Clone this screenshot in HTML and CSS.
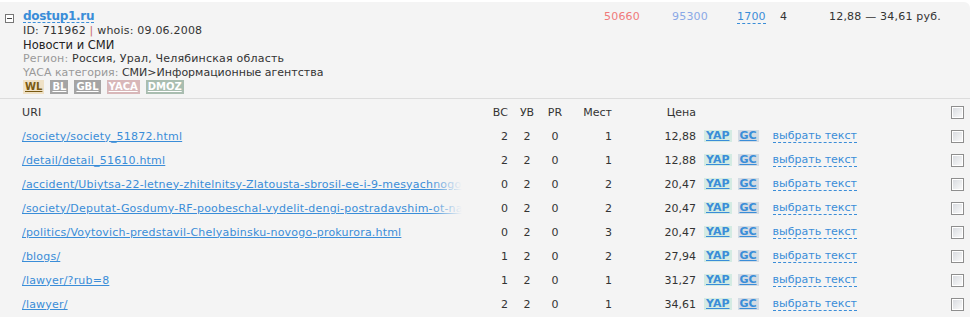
FILE: index.html
```html
<!DOCTYPE html>
<html lang="ru">
<head>
    <meta charset="UTF-8">
    <title>dostup1.ru</title>
    <link rel="stylesheet" href="styles.css">
</head>
<body>
    <div class="site">
        <div class="site-head">
            <span class="toggle"></span>
            <div class="info">
                <a class="domain" href="#">dostup1.ru</a>
                <div class="meta wide">ID: 711962 <span class="sep">|</span> whois: 09.06.2008</div>
                <div class="topic">Новости и СМИ</div>
                <div class="meta wide"><span class="label">Регион:</span> Россия, Урал, Челябинская область</div>
                <div class="meta"><span class="label">YACA категория:</span> СМИ&gt;Информационные агентства</div>
                <div class="flags">
                    <a class="flag flag-wl" href="#">WL</a>
                    <a class="flag flag-bl" href="#">BL</a>
                    <a class="flag flag-bl" href="#">GBL</a>
                    <a class="flag flag-yaca" href="#">YACA</a>
                    <a class="flag flag-dmoz" href="#">DMOZ</a>
                </div>
            </div>
            <div class="stats">
                <span class="stat-red">50660</span>
                <span class="stat-blue">95300</span>
                <span><a class="dashed" href="#">1700</a></span>
                <span>4</span>
                <span>12,88 — 34,61 руб.</span>
            </div>
        </div>

        <div class="pages">
            <div class="row row-head">
                <div class="uri">URI</div>
                <div class="num">ВС</div>
                <div class="mid">УВ</div>
                <div class="mid">PR</div>
                <div class="num">Мест</div>
                <div class="num">Цена</div>
                <div></div>
                <div><span class="check"></span></div>
            </div>
            <div class="row">
                <div class="uri"><a href="#">/society/society_51872.html</a></div>
                <div class="num">2</div><div class="mid">2</div><div class="mid">0</div><div class="num">1</div>
                <div class="num">12,88</div>
                <div class="acts"><a class="tag tag-yap" href="#">YAP</a><a class="tag tag-gc" href="#">GC</a><a class="dashed pick" href="#">выбрать текст</a></div>
                <div><span class="check"></span></div>
            </div>
            <div class="row">
                <div class="uri"><a href="#">/detail/detail_51610.html</a></div>
                <div class="num">2</div><div class="mid">2</div><div class="mid">0</div><div class="num">1</div>
                <div class="num">12,88</div>
                <div class="acts"><a class="tag tag-yap" href="#">YAP</a><a class="tag tag-gc" href="#">GC</a><a class="dashed pick" href="#">выбрать текст</a></div>
                <div><span class="check"></span></div>
            </div>
            <div class="row">
                <div class="uri fade"><a href="#">/accident/Ubiytsa-22-letney-zhitelnitsy-Zlatousta-sbrosil-ee-i-9-mesyachnogo-rebenka.html</a></div>
                <div class="num">0</div><div class="mid">2</div><div class="mid">0</div><div class="num">2</div>
                <div class="num">20,47</div>
                <div class="acts"><a class="tag tag-yap" href="#">YAP</a><a class="tag tag-gc" href="#">GC</a><a class="dashed pick" href="#">выбрать текст</a></div>
                <div><span class="check"></span></div>
            </div>
            <div class="row">
                <div class="uri fade"><a href="#">/society/Deputat-Gosdumy-RF-poobeschal-vydelit-dengi-postradavshim-ot-navodneniya.html</a></div>
                <div class="num">0</div><div class="mid">2</div><div class="mid">0</div><div class="num">2</div>
                <div class="num">20,47</div>
                <div class="acts"><a class="tag tag-yap" href="#">YAP</a><a class="tag tag-gc" href="#">GC</a><a class="dashed pick" href="#">выбрать текст</a></div>
                <div><span class="check"></span></div>
            </div>
            <div class="row">
                <div class="uri"><a href="#">/politics/Voytovich-predstavil-Chelyabinsku-novogo-prokurora.html</a></div>
                <div class="num">0</div><div class="mid">2</div><div class="mid">0</div><div class="num">3</div>
                <div class="num">20,47</div>
                <div class="acts"><a class="tag tag-yap" href="#">YAP</a><a class="tag tag-gc" href="#">GC</a><a class="dashed pick" href="#">выбрать текст</a></div>
                <div><span class="check"></span></div>
            </div>
            <div class="row">
                <div class="uri"><a href="#">/blogs/</a></div>
                <div class="num">1</div><div class="mid">2</div><div class="mid">0</div><div class="num">2</div>
                <div class="num">27,94</div>
                <div class="acts"><a class="tag tag-yap" href="#">YAP</a><a class="tag tag-gc" href="#">GC</a><a class="dashed pick" href="#">выбрать текст</a></div>
                <div><span class="check"></span></div>
            </div>
            <div class="row">
                <div class="uri"><a href="#">/lawyer/?rub=8</a></div>
                <div class="num">1</div><div class="mid">2</div><div class="mid">0</div><div class="num">1</div>
                <div class="num">31,27</div>
                <div class="acts"><a class="tag tag-yap" href="#">YAP</a><a class="tag tag-gc" href="#">GC</a><a class="dashed pick" href="#">выбрать текст</a></div>
                <div><span class="check"></span></div>
            </div>
            <div class="row">
                <div class="uri"><a href="#">/lawyer/</a></div>
                <div class="num">2</div><div class="mid">2</div><div class="mid">0</div><div class="num">1</div>
                <div class="num">34,61</div>
                <div class="acts"><a class="tag tag-yap" href="#">YAP</a><a class="tag tag-gc" href="#">GC</a><a class="dashed pick" href="#">выбрать текст</a></div>
                <div><span class="check"></span></div>
            </div>
        </div>
    </div>
</body>
</html>
```

FILE: styles.css
```css
body { margin: 0; background: #fff; font-family: "DejaVu Sans", Verdana, sans-serif; font-size: 11px; color: #333; }
a { color: #3a8dd8; }

.site { width: 970px; height: 315px; margin-top: 2px; background: #f4f4f4; border-top-right-radius: 6px; overflow: hidden; }

.site-head { display: flex; padding: 8px 0 4px 5px; border-bottom: 1px solid #dcdcdc; }
.toggle { position: relative; width: 7px; height: 7px; margin-top: 4px; border: 1px solid #777; background: #fff; }
.toggle::after { content: ""; position: absolute; left: 1px; top: 3px; width: 5px; height: 1px; background: #444; }
.info { width: 581px; margin-left: 9px; line-height: 14px; }
.domain { display: inline-block; font-size: 12px; font-weight: bold; letter-spacing: -0.3px; line-height: 12px; text-decoration: none; border-bottom: 1px dashed #3a8dd8; }
.meta { color: #333; }
.wide { letter-spacing: 0.2px; }
.sep { color: #c86a6a; }
.label { color: #999; }
.topic { font-size: 11.5px; color: #222; }
.flags { display: flex; gap: 6px; }
.flag { padding: 0 2px; font-size: 10px; font-weight: bold; line-height: 14px; color: #fff; }
.flag-wl { background: #efe1c6; color: #7a5a12; }
.flag-bl { background: #a4a4a4; }
.flag-yaca { background: #d8b7b9; }
.flag-dmoz { background: #a9bdb0; }

.stats { display: grid; grid-template-columns: 68px 65px 43px 49px auto; line-height: 14px; letter-spacing: 0.2px; }
.stat-red { color: #f07a7a; }
.stat-blue { color: #8aa8e6; }
.dashed { text-decoration: none; border-bottom: 1px dashed #3a8dd8; }

.pages { padding-top: 1px; }
.row { display: grid; grid-template-columns: 448px 38px 38px 18px 48px 84px 1fr 13px; align-items: center; height: 24px; padding: 0 6px 0 22px; }
.uri { white-space: nowrap; overflow: hidden; letter-spacing: 0.2px; }
.fade { position: relative; }
.fade::after { content: ""; position: absolute; top: 0; right: 0; bottom: 0; width: 40px; background: linear-gradient(to right, rgba(244,244,244,0), #f4f4f4 80%); }
.num { text-align: right; }
.mid { text-align: center; }
.acts { display: flex; align-items: center; padding-left: 8px; }
.tag { padding: 0 2px; font-weight: bold; line-height: 12px; }
.tag-yap { background: #d4ebe3; }
.tag-gc { margin-left: 6px; background: #d3dbe4; }
.pick { margin-left: 14px; line-height: 13px; }
.check { display: block; width: 11px; height: 11px; border: 1px solid #8e8e8e; box-shadow: inset 0 0 0 1px #fff; background: linear-gradient(135deg, #d6d9de, #fcfcfc); }
```
